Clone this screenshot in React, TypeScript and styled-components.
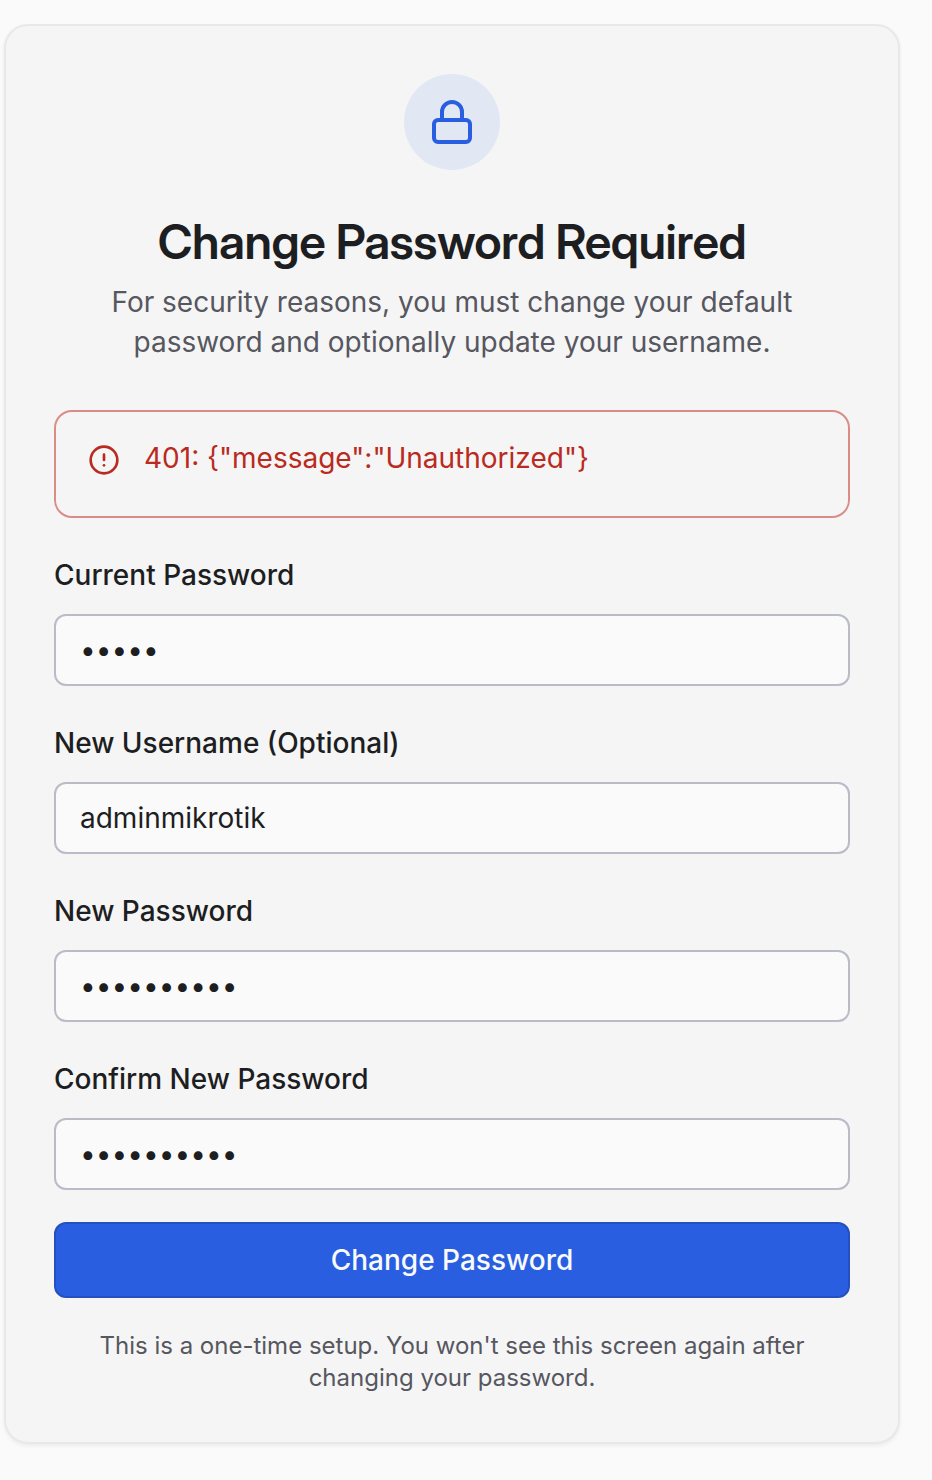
import React, { useState } from "react";
import styled, { createGlobalStyle } from "styled-components";
import { CircleAlert, Lock } from "lucide-react";

const GlobalStyle = createGlobalStyle`
  *, *::before, *::after { box-sizing: border-box; }
  body {
    margin: 0;
    background: #fafafa;
    color: #1d1e22;
    font-family: Inter, "Liberation Sans", sans-serif;
    font-size: 28px;
    line-height: 40px;
  }
`;

const Page = styled.main`
  padding: 24px 32px 36px 4px;
`;

const Card = styled.section`
  padding: 48px;
  background: #f5f5f5;
  border: 2px solid #e8e8e8;
  border-radius: 24px;
  box-shadow: 0 2px 4px rgba(0, 0, 0, 0.06);
`;

const Header = styled.header`
  display: flex;
  flex-direction: column;
  align-items: center;
  text-align: center;
`;

const IconBadge = styled.div`
  display: flex;
  align-items: center;
  justify-content: center;
  width: 96px;
  height: 96px;
  margin-bottom: 48px;
  border-radius: 50%;
  background: #e1e7f3;
  color: #295ee0;
`;

const Title = styled.h1`
  margin: 0 0 16px;
  font-family: "Inter Display", Inter, "Liberation Sans", sans-serif;
  font-size: 48px;
  font-weight: 600;
  line-height: 48px;
  letter-spacing: -0.01em;
`;

const Description = styled.p`
  max-width: 700px;
  margin: 0;
  color: #56575f;
`;

const Alert = styled.div`
  display: flex;
  gap: 24px;
  min-height: 108px;
  margin: 48px 0 32px;
  padding: 26px 32px;
  border: 2px solid #da8c86;
  border-radius: 18px;
  color: #b92a20;

  svg {
    flex: none;
    margin-top: 6px;
  }
`;

const Form = styled.form`
  display: flex;
  flex-direction: column;
  gap: 32px;
`;

const Field = styled.div`
  display: flex;
  flex-direction: column;
  gap: 14px;
`;

const Label = styled.label`
  font-weight: 500;
  line-height: 50px;
`;

const Input = styled.input`
  width: 100%;
  height: 72px;
  padding: 0 24px;
  border: 2px solid #b9bbc6;
  border-radius: 12px;
  background: #fafafa;
  color: inherit;
  font: inherit;
`;

const SubmitButton = styled.button`
  height: 76px;
  border: 2px solid #2450c0;
  border-radius: 12px;
  background: #295ee0;
  color: #f8fafc;
  font: inherit;
  font-weight: 500;
  cursor: pointer;
`;

const Note = styled.p`
  margin: 32px 0 0;
  color: #56575f;
  font-size: 24px;
  line-height: 32px;
  text-align: center;
`;

const fields = [
  { id: "current-password", label: "Current Password", type: "password", value: "admin" },
  { id: "new-username", label: "New Username (Optional)", type: "text", value: "adminmikrotik" },
  { id: "new-password", label: "New Password", type: "password", value: "mikrotik12" },
  { id: "confirm-password", label: "Confirm New Password", type: "password", value: "mikrotik12" },
];

export default function App() {
  const [values, setValues] = useState<Record<string, string>>(
    Object.fromEntries(fields.map((field) => [field.id, field.value])),
  );

  return (
    <>
      <GlobalStyle />
      <Page>
        <Card>
          <Header>
            <IconBadge>
              <Lock size={48} aria-hidden="true" />
            </IconBadge>
            <Title>Change Password Required</Title>
            <Description>
              For security reasons, you must change your default password and optionally update your
              username.
            </Description>
          </Header>
          <Alert role="alert">
            <CircleAlert size={32} aria-hidden="true" />
            <span>{'401: {"message":"Unauthorized"}'}</span>
          </Alert>
          <Form onSubmit={(event) => event.preventDefault()}>
            {fields.map(({ id, label, type }) => (
              <Field key={id}>
                <Label htmlFor={id}>{label}</Label>
                <Input
                  id={id}
                  type={type}
                  value={values[id]}
                  onChange={(event) => setValues({ ...values, [id]: event.target.value })}
                />
              </Field>
            ))}
            <SubmitButton type="submit">Change Password</SubmitButton>
          </Form>
          <Note>This is a one-time setup. You won't see this screen again after changing your password.</Note>
        </Card>
      </Page>
    </>
  );
}
